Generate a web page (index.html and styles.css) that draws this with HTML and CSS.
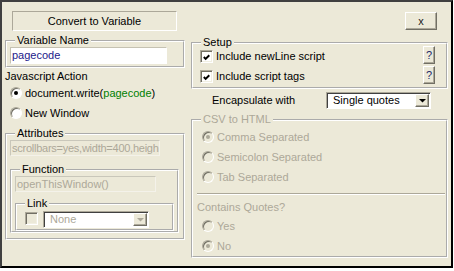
FILE: index.html
```html
<!DOCTYPE html>
<html>
<head>
<meta charset="utf-8">
<link rel="stylesheet" href="styles.css">
</head>
<body>
<div class="window">
  <div class="col">
    <div class="title">Convert to Variable</div>
    <fieldset class="group varname">
      <legend>Variable Name</legend>
      <div class="tb tb-name">pagecode</div>
    </fieldset>
    <div class="label">Javascript Action</div>
    <div class="opt opt-left"><span class="radio checked"></span><span class="opt-text">document.write(<span class="green">pagecode</span>)</span></div>
    <div class="opt opt-left"><span class="radio"></span><span class="opt-text">New Window</span></div>
    <fieldset class="group attributes">
      <legend>Attributes</legend>
      <div class="tb tb-disabled tb-attr">scrollbars=yes,width=400,heigh</div>
      <fieldset class="group function">
        <legend>Function</legend>
        <div class="tb tb-disabled tb-func">openThisWindow()</div>
        <fieldset class="group link">
          <legend>Link</legend>
          <div class="link-row">
            <span class="cb cb-disabled"></span>
            <div class="select select-disabled select-link"><span class="select-text">None</span><span class="drop"><svg width="7" height="4" viewBox="0 0 7 4"><polygon points="0,0 7,0 3.5,3.5" fill="#ACA899"/></svg></span></div>
          </div>
        </fieldset>
      </fieldset>
    </fieldset>
  </div>
  <div class="col">
    <div class="topbar"><button class="btn3d close">x</button></div>
    <fieldset class="group setup">
      <legend>Setup</legend>
      <div class="setup-rows">
        <div class="setup-row"><span class="cb"><svg width="11" height="11" viewBox="0 0 11 11"><polyline points="2,5 4,7 8,3" fill="none" stroke="#000" stroke-width="2.2"/></svg></span><span class="setup-text">Include newLine script</span><button class="btn3d help">?</button></div>
        <div class="setup-row"><span class="cb"><svg width="11" height="11" viewBox="0 0 11 11"><polyline points="2,5 4,7 8,3" fill="none" stroke="#000" stroke-width="2.2"/></svg></span><span class="setup-text">Include script tags</span><button class="btn3d help">?</button></div>
      </div>
    </fieldset>
    <div class="encap">
      <span>Encapsulate with</span>
      <div class="select"><span class="select-text">Single quotes</span><span class="drop"><svg width="7" height="4" viewBox="0 0 7 4"><polygon points="0,0 7,0 3.5,3.5" fill="#000"/></svg></span></div>
    </div>
    <fieldset class="group csv disabled">
      <legend>CSV to HTML</legend>
      <div class="csv-body">
        <div class="opt opt-right first"><span class="radio radio-disabled checked"></span><span class="opt-text">Comma Separated</span></div>
        <div class="opt opt-right"><span class="radio radio-disabled"></span><span class="opt-text">Semicolon Separated</span></div>
        <div class="opt opt-right"><span class="radio radio-disabled"></span><span class="opt-text">Tab Separated</span></div>
        <div class="sep"></div>
        <div class="contains">Contains Quotes?</div>
        <div class="opt opt-right quotes"><span class="radio radio-disabled"></span><span class="opt-text">Yes</span></div>
        <div class="opt opt-right"><span class="radio radio-disabled checked"></span><span class="opt-text">No</span></div>
      </div>
    </fieldset>
  </div>
</div>
</body>
</html>
```
FILE: styles.css
```css
* { box-sizing: border-box; }

body {
  margin: 0;
  background: #ffffff;
  font: 11px/13px "Liberation Sans", Arial, sans-serif;
  color: #000;
}

.window {
  width: 453px;
  height: 268px;
  background: #ECE9D8;
  border-style: solid;
  border-width: 2px;
  border-color: #404040 #000 #000 #404040;
  padding: 9px 0 0 3px;
  display: grid;
  grid-template-columns: 180px 257px;
  column-gap: 6px;
  align-items: start;
}

.col { display: block; }

.title {
  margin-left: 7px;
  width: 165px;
  height: 20px;
  border: 1px solid;
  border-color: #ACA899 #fff #fff #ACA899;
  text-align: center;
  line-height: 18px;
}

.group {
  margin: 0;
  padding: 0;
  border: 2px groove #fff;
  min-width: 0;
}

.group legend {
  margin-left: 8px;
  padding: 0 2px;
  line-height: 13px;
}

.varname {
  margin-top: 3px;
  padding-bottom: 2px;
}

.tb {
  height: 17px;
  border: 1px solid;
  border-color: #C5C2B2 #fff #fff #C5C2B2;
  background: #fff;
  padding-left: 1px;
  line-height: 15px;
  white-space: nowrap;
  overflow: hidden;
}

.tb-name {
  margin-left: 3px;
  width: 157px;
  color: #22208a;
}

.tb-disabled {
  height: 16px;
  line-height: 14px;
  background: #ECE9D8;
  color: #ACA899;
  border-color: #C9C7BA #F4F2EA #F4F2EA #C9C7BA;
}

.label { margin-top: 2px; }

.opt {
  display: flex;
  align-items: center;
  height: 20px;
}

.opt-left { padding-left: 5px; }

.opt-text { margin-left: 3px; }

.green { color: #008000; }

.radio {
  position: relative;
  flex: none;
  width: 12px;
  height: 12px;
  border-radius: 50%;
  border: 1px solid;
  border-color: #ACA899 #fff #fff #ACA899;
  box-shadow: inset 1px 1px 0 #716F64;
  background: #fff;
}

.radio.checked::after {
  content: "";
  position: absolute;
  left: 3px;
  top: 3px;
  width: 4px;
  height: 4px;
  border-radius: 50%;
  background: #000;
}

.radio-disabled { background: #ECE9D8; }
.radio-disabled.checked::after { background: #ACA899; }

.attributes {
  margin-top: 4px;
  padding-bottom: 5px;
}

.tb-attr {
  margin-left: 3px;
  width: 150px;
  letter-spacing: -0.25px;
}

.function {
  margin: 7px 0 0 3px;
  width: 169px;
}

.tb-func { margin-left: 3px; width: 141px; }

.link {
  margin: 5px 0 0 3px;
  width: 159px;
  padding-bottom: 1px;
}

.link-row { display: flex; align-items: flex-start; }

.cb {
  flex: none;
  display: flex;
  align-items: center;
  justify-content: center;
  width: 13px;
  height: 13px;
  border: 1px solid;
  border-color: #ACA899 #fff #fff #ACA899;
  box-shadow: inset 1px 1px 0 #716F64, inset -1px -1px 0 #F1EFE2;
  background: #fff;
}

.cb svg { display: block; margin: 1px 0 0 1px; }

.link-row .cb { margin: 2px 0 0 8px; }

.cb-disabled { background: #ECE9D8; }

.select {
  display: flex;
  align-items: center;
  height: 17px;
  border: 1px solid;
  border-color: #ACA899 #fff #fff #ACA899;
  box-shadow: inset 1px 1px 0 #404040;
  background: #fff;
  padding: 1px;
}

.select-text { flex: 1; padding-left: 5px; line-height: 13px; }

.select-disabled .select-text { color: #ACA899; }

.select-link { margin: 1px 0 0 5px; width: 106px; }

.drop {
  flex: none;
  display: flex;
  align-items: center;
  justify-content: center;
  width: 14px;
  height: 13px;
  background: #ECE9D8;
  border: 1px solid;
  border-color: #fff #716F64 #716F64 #fff;
  box-shadow: inset -1px -1px 0 #ACA899;
}

.drop svg { display: block; margin-top: 1px; }

.btn3d {
  font: inherit;
  color: #1b2a6a;
  padding: 0;
  margin: 0;
  background: #ECE9D8;
  border: 1px solid;
  border-color: #fff #716F64 #716F64 #fff;
  box-shadow: inset -1px -1px 0 #ACA899;
}

.topbar {
  display: flex;
  justify-content: flex-end;
  height: 20px;
  padding-right: 11px;
}

.close {
  margin-top: 1px;
  width: 32px;
  height: 18px;
  line-height: 14px;
  color: #222;
}

.setup { margin-top: 5px; padding-bottom: 2px; }

.setup-rows { margin-top: -4px; }

.setup-row {
  display: flex;
  align-items: flex-start;
  height: 20px;
}

.setup-row .cb { margin: 5px 0 0 7px; }

.setup-text { flex: 1; margin: 5px 0 0 3px; }

.help {
  margin: 1px 11px 0 0;
  width: 12px;
  height: 18px;
  line-height: 14px;
}

.encap {
  display: grid;
  grid-template-columns: 114px 105px;
  align-items: center;
  margin: 3px 0 0 21px;
}

.csv { margin-top: 4px; }

.disabled legend,
.disabled .opt-text,
.disabled .contains { color: #ACA899; }

.opt-right { padding-left: 9px; }

.opt-right.first { margin-top: 1px; }

.sep {
  height: 2px;
  border-top: 1px solid #ACA899;
  border-bottom: 1px solid #fff;
  margin: 6px 1px 0 4px;
}

.contains { margin: 6px 0 0 4px; }

.quotes { margin-top: 2px; }
```
